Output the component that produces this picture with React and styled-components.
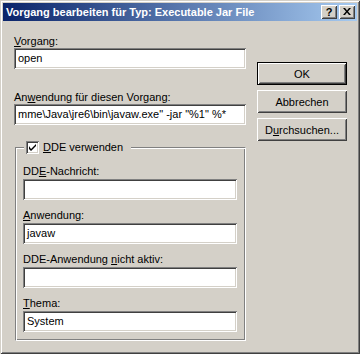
import React from 'react'
import styled, { createGlobalStyle } from 'styled-components'

const GlobalStyle = createGlobalStyle`
  html, body {
    margin: 0;
    padding: 0;
    background: #d4d0c8;
  }
  body {
    font-family: 'Liberation Sans', Arial, sans-serif;
    font-size: 11px;
    color: #000;
  }
`

const fields = [
  { label: <>DD<Key>E</Key>-Nachricht:</>, value: '' },
  { label: <><Key>A</Key>nwendung:</>, value: 'javaw' },
  { label: <>DDE-Anwendung <Key>n</Key>icht aktiv:</>, value: '' },
  { label: <><Key>T</Key>hema:</>, value: 'System' },
]

function Key({ children }) {
  return <Under>{children}</Under>
}

const App = () => {
  return (
    <>
      <GlobalStyle />
      <Window>
        <TitleBar>
          <TitleText>Vorgang bearbeiten für Typ: Executable Jar File</TitleText>
          <TitleButtons>
            <CaptionButton>?</CaptionButton>
            <CaptionButton>
              <svg width="8" height="7" viewBox="0 0 8 7">
                <path d="M0 0h2l2 2.5L6 0h2L5 3.5 8 7H6L4 4.5 2 7H0l3-3.5z" fill="#000" />
              </svg>
            </CaptionButton>
          </TitleButtons>
        </TitleBar>

        <Body>
          <LeftColumn>
            <Label><Key>V</Key>organg:</Label>
            <TextBox>open</TextBox>

            <Label $top={22}>An<Key>w</Key>endung für diesen Vorgang:</Label>
            <TextBox>mme\Java\jre6\bin\javaw.exe" -jar "%1" %*</TextBox>

            <GroupBox>
              <Legend>
                <CheckBox>
                  <svg width="7" height="7" viewBox="0 0 7 7">
                    <path d="M0 2v3l2 2 5-5V0L2 5z" fill="#000" />
                  </svg>
                </CheckBox>
                <span><Key>D</Key>DE verwenden</span>
              </Legend>
              {fields.map((f, i) => (
                <Field key={i} $first={i === 0}>
                  <Label>{f.label}</Label>
                  <TextBox>{f.value}</TextBox>
                </Field>
              ))}
            </GroupBox>
          </LeftColumn>

          <RightColumn>
            <Button $default>OK</Button>
            <Button>Abbrechen</Button>
            <Button>D<Key>u</Key>rchsuchen...</Button>
          </RightColumn>
        </Body>
      </Window>
    </>
  )
}

export default App

const Under = styled.u`
  text-decoration: underline;
  text-underline-offset: 1px;
`

const Window = styled.div`
  width: 360px;
  height: 354px;
  box-sizing: border-box;
  padding: 3px;
  background: #d4d0c8;
  box-shadow: inset 1px 1px #d4d0c8, inset -1px -1px #404040,
    inset 2px 2px #ffffff, inset -2px -2px #808080;
  display: flex;
  flex-direction: column;
`

const TitleBar = styled.div`
  height: 18px;
  flex-shrink: 0;
  background: linear-gradient(to right, #0a246a, #a6caf0);
  display: flex;
  align-items: center;
  justify-content: space-between;
  padding: 0 2px 0 2px;
`

const TitleText = styled.div`
  color: #fff;
  font-weight: bold;
  font-size: 11px;
  white-space: nowrap;
  padding-left: 1px;
`

const TitleButtons = styled.div`
  display: flex;
  gap: 2px;
`

const CaptionButton = styled.div`
  width: 16px;
  height: 14px;
  box-sizing: border-box;
  background: #d4d0c8;
  box-shadow: inset 1px 1px #fff, inset -1px -1px #404040,
    inset 2px 2px #d4d0c8, inset -2px -2px #808080;
  display: flex;
  align-items: center;
  justify-content: center;
  font-weight: bold;
  font-size: 11px;
  line-height: 14px;
  padding-bottom: 1px;
`

const Body = styled.div`
  display: flex;
  gap: 11px;
  padding: 14px 0 0 11px;
`

const LeftColumn = styled.div`
  width: 232px;
  display: flex;
  flex-direction: column;
`

const RightColumn = styled.div`
  width: 90px;
  padding-top: 27px;
  display: flex;
  flex-direction: column;
  gap: 5px;
`

const Label = styled.div`
  height: 13px;
  line-height: 13px;
  margin-top: ${p => p.$top || 0}px;
  white-space: nowrap;
`

const TextBox = styled.div`
  height: 21px;
  box-sizing: border-box;
  background: #fff;
  box-shadow: inset 1px 1px #808080, inset -1px -1px #ffffff,
    inset 2px 2px #404040, inset -2px -2px #d4d0c8;
  padding: 0 4px;
  line-height: 21px;
  white-space: nowrap;
  overflow: hidden;
`

const GroupBox = styled.div`
  position: relative;
  margin: 22px 0 0 1px;
  height: 194px;
  box-sizing: border-box;
  border: 1px solid;
  border-color: #808080 #fff #fff #808080;
  box-shadow: inset 1px 1px #fff, inset -1px -1px #808080;
  padding: 17px 8px 0 7px;
  display: flex;
  flex-direction: column;
`

const Legend = styled.div`
  position: absolute;
  top: -7px;
  left: 8px;
  padding: 0 8px 0 2px;
  background: #d4d0c8;
  display: flex;
  align-items: center;
  gap: 4px;
  height: 13px;
  line-height: 13px;
`

const CheckBox = styled.div`
  width: 13px;
  height: 13px;
  box-sizing: border-box;
  background: #fff;
  box-shadow: inset 1px 1px #808080, inset -1px -1px #ffffff,
    inset 2px 2px #404040, inset -2px -2px #d4d0c8;
  display: flex;
  align-items: center;
  justify-content: center;
`

const Field = styled.div`
  display: flex;
  flex-direction: column;
  gap: 1px;
  margin-top: ${p => (p.$first ? 0 : 9)}px;
`

const Button = styled.div`
  height: 23px;
  box-sizing: border-box;
  background: #d4d0c8;
  border: ${p => (p.$default ? '1px solid #000' : 'none')};
  box-shadow: inset 1px 1px #fff, inset -1px -1px #404040,
    inset 2px 2px #d4d0c8, inset -2px -2px #808080;
  display: flex;
  align-items: center;
  justify-content: center;
  white-space: nowrap;
`
